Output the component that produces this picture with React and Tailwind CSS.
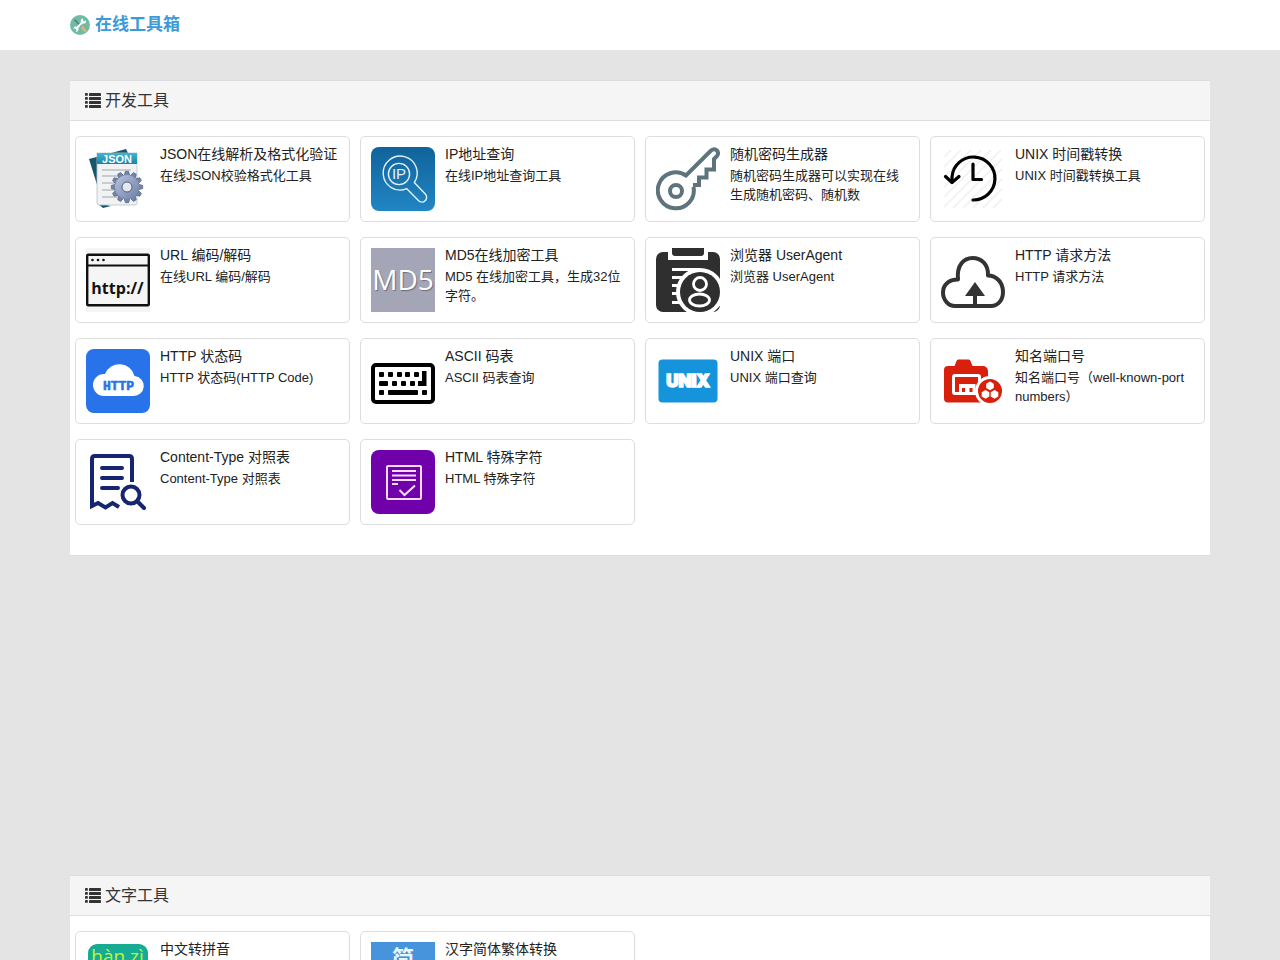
import React from 'react';

const LogoIcon = () => (
  <svg viewBox="0 0 20 20" className="size-5" aria-hidden="true">
    <circle cx="10" cy="10" r="10" fill="#6fbba6" />
    <path d="M12 12l3.200 3.800" stroke="#e3b27a" strokeWidth="2.600" strokeLinecap="round" />
    <path d="M4.800 5l6 6" stroke="#4f777a" strokeWidth="1.300" strokeLinecap="round" />
    <path d="M6 14l7.600-8" stroke="#fff" strokeWidth="2" />
    <path d="M15.800 5.200a2.600 2.600 0 1 1-2.800-1.700l-.2 2 1.200 1z" fill="#fff" />
    <path d="M3.400 13.500a2.600 2.600 0 1 1 2.200 3.100l1-1.600-.9-1.300z" fill="#fff" />
  </svg>
);

const ListIcon = () => (
  <svg viewBox="0 0 16 16" className="size-4" fill="#333" aria-hidden="true">
    {[0, 4, 8, 12].map((y) => (
      <g key={y}>
        <rect x="0" y={y} width="2.800" height="2.800" rx="0.600" />
        <rect x="4" y={y} width="12" height="2.900" rx="0.400" />
      </g>
    ))}
  </svg>
);

const JsonIcon = () => (
  <svg viewBox="0 0 64 64" className="size-16" aria-hidden="true">
    <defs>
      <linearGradient id="json-bar" x1="0" y1="0" x2="0" y2="1">
        <stop offset="0" stopColor="#43b4d2" />
        <stop offset="1" stopColor="#1685aa" />
      </linearGradient>
      <linearGradient id="json-gear" x1="0" y1="0" x2="1" y2="1">
        <stop offset="0" stopColor="#b8c4de" />
        <stop offset="1" stopColor="#6e7fa8" />
      </linearGradient>
    </defs>
    <path d="M3 12L40 2l4 8-26 50z" fill="#17566b" />
    <path d="M11 56l6 5 8-2z" fill="#17566b" />
    <path d="M11 6h40v50a2 2 0 0 1-2 2H13a2 2 0 0 1-2-2z" fill="#f0f2f4" stroke="#b9c2c8" strokeWidth="0.8" />
    <path d="M11 6h40v11H11z" fill="url(#json-bar)" />
    <text x="31" y="15.500" textAnchor="middle" fontFamily="Liberation Sans, sans-serif" fontWeight="700" fontSize="11" fill="#fff">
      JSON
    </text>
    <path d="M16 23h29M16 29h26M16 36h20M16 43h14M16 50h16" stroke="#a0a6aa" strokeWidth="1.2" />
    <g fill="#7485aa" stroke="#4a5874" strokeWidth="0.6">
      {[0, 30, 60, 90, 120, 150, 180, 210, 240, 270, 300, 330].map((a) => (
        <path key={a} d="M38.200 28.500l1.200-4.200h3.200l1.200 4.200z" transform={`rotate(${a} 41 40)`} />
      ))}
    </g>
    <circle cx="41" cy="40" r="12" fill="url(#json-gear)" />
    <circle cx="41" cy="40" r="5" fill="#e5e8ee" stroke="#53617e" />
  </svg>
);

const IpIcon = () => (
  <svg viewBox="0 0 64 64" className="size-16" aria-hidden="true">
    <defs>
      <linearGradient id="ip-bg" x1="0" y1="0" x2="0" y2="1">
        <stop offset="0" stopColor="#10639b" />
        <stop offset="1" stopColor="#2186c4" />
      </linearGradient>
    </defs>
    <rect width="64" height="64" rx="8" fill="url(#ip-bg)" />
    <g fill="none" stroke="#e3f2fa" strokeWidth="1.400" strokeLinejoin="round">
      <path d="M35.800 41.700a17 17 0 1 1 7.500-6.200L54.300 47a4.600 4.600 0 0 1-6.900 6.600z" />
      <circle cx="28" cy="27" r="10.600" />
    </g>
    <text x="28" y="32" textAnchor="middle" fontFamily="Liberation Sans, sans-serif" fontSize="15" fill="#e3f2fa">
      IP
    </text>
  </svg>
);

const KeyIcon = () => (
  <svg viewBox="0 0 64 64" className="size-16" fill="none" stroke="#5d747c" strokeWidth="4" aria-hidden="true">
    <path d="M37 38h6v-7.500h7.500v-8h7.500V12l3-3q2-3 0-5.500-2.800-2.500-6 0L30 28.500A18 18 0 1 0 37.500 40" />
    <circle cx="20" cy="44" r="6" />
  </svg>
);

const TimestampIcon = () => (
  <svg viewBox="0 0 64 64" className="size-16" fill="none" aria-hidden="true">
    <path
      d="M3 10l7-7M3 20L20 3M3 30L30 3M3 40L40 3M3 50L50 3M3 60L60 3M12 61l49-49M22 61l39-39M32 61l29-29M42 61l19-19M52 61l9-9"
      stroke="#f0f0f0"
      strokeWidth="1.600"
    />
    <path d="M32 53a21.500 21.500 0 1 0-21-23v5" stroke="#000" strokeWidth="3.200" strokeLinecap="round" />
    <path d="M4.500 29.500l6.500 6 7-6M32 17v15.500h8.500" stroke="#000" strokeWidth="3.200" strokeLinecap="round" strokeLinejoin="round" />
  </svg>
);

const UrlIcon = () => (
  <svg viewBox="0 0 64 64" className="size-16" aria-hidden="true">
    <rect width="64" height="64" fill="#f5f5f5" />
    <rect x="1.200" y="6.700" width="61.600" height="50.600" rx="1" fill="none" stroke="#111" strokeWidth="2.400" />
    <path d="M1 17.500h62" stroke="#111" strokeWidth="2" />
    <g fill="#111">
      <circle cx="6.500" cy="12" r="1.300" />
      <circle cx="12" cy="12" r="1.300" />
      <circle cx="17.500" cy="12" r="1.300" />
    </g>
    <text x="31.500" y="46" textAnchor="middle" fontFamily="Open Sans, sans-serif" fontWeight="700" fontSize="16" fill="#111">
      http://
    </text>
  </svg>
);

const Md5Icon = () => (
  <svg viewBox="0 0 64 64" className="size-16" aria-hidden="true">
    <rect width="64" height="64" fill="#a4a5b6" />
    <text
      x="32"
      y="42"
      textAnchor="middle"
      fontFamily="Open Sans, sans-serif"
      fontSize="28"
      fill="#fff"
      className="[text-shadow:1px_1px_1px_#6b6c7c]"
    >
      MD5
    </text>
  </svg>
);

const UserAgentIcon = () => (
  <svg viewBox="0 0 64 64" className="size-16" fill="#2f2f2f" aria-hidden="true">
    <path d="M16 0h32v5a3 3 0 0 1-3 3H19a3 3 0 0 1-3-3z" />
    <path d="M7 4h5v8h40V4h5a7 7 0 0 1 7 7v46a7 7 0 0 1-7 7H7a7 7 0 0 1-7-7V11a7 7 0 0 1 7-7z" />
    <g fill="#fff">
      <rect x="16" y="20" width="28" height="3" />
      <rect x="16" y="28" width="14" height="3" />
      <rect x="16" y="36" width="8" height="3" />
      <rect x="16" y="44" width="6" height="3" />
      <rect x="16" y="53" width="8" height="3" />
      <circle cx="44" cy="44" r="24" />
    </g>
    <circle cx="44" cy="44" r="20" />
    <g fill="none" stroke="#fff" strokeWidth="2.800">
      <circle cx="44" cy="36" r="6.500" />
      <ellipse cx="43.500" cy="52" rx="10" ry="6" />
    </g>
  </svg>
);

const CloudUploadIcon = () => (
  <svg viewBox="0 0 64 64" className="size-16" aria-hidden="true">
    <path
      d="M14 58h36c7 0 12-6 12-14 0-10-7-16.500-15-16.500C47.500 16 40 10 31.500 10S15.500 17 17 31.500C7.500 31.500 2 37 2 44.500S7.500 58 14 58z"
      fill="none"
      stroke="#333"
      strokeWidth="4"
      strokeLinejoin="round"
    />
    <path d="M34 34l10 14h-8v11h-4V48h-8z" fill="#333" />
  </svg>
);

const HttpStatusIcon = () => (
  <svg viewBox="0 0 64 64" className="size-16" aria-hidden="true">
    <rect width="64" height="64" rx="8" fill="#2873ea" />
    <path d="M18 47a11 11 0 0 1 0-22h1a15.500 15.500 0 0 1 29.500 2A10 10 0 0 1 47 47z" fill="#fff" />
    <text x="32.500" y="41" textAnchor="middle" fontFamily="Liberation Mono, monospace" fontWeight="700" fontSize="13" fill="#2873ea" stroke="#2873ea" strokeWidth="0.600">
      HTTP
    </text>
  </svg>
);

const KeyboardIcon = () => (
  <svg viewBox="0 0 64 64" className="size-16" aria-hidden="true">
    <rect x="2" y="16" width="60" height="37" rx="3" fill="#fff" stroke="#000" strokeWidth="4" />
    <g fill="#000">
      {[8, 17, 26, 34, 43].map((x) => (
        <rect key={x} x={x} y="23" width="5" height="5" rx="1" />
      ))}
      <path d="M51 22h4.500v15H47v-5h4z" />
      <rect x="8" y="32" width="9" height="5" rx="1" />
      <rect x="21" y="32" width="5" height="5" rx="1" />
      <rect x="30" y="32" width="5" height="5" rx="1" />
      <rect x="39" y="32" width="5" height="5" rx="1" />
      <rect x="8" y="41" width="5" height="5" rx="1" />
      <rect x="17" y="41" width="30" height="5" rx="1" />
      <rect x="51" y="41" width="5" height="5" rx="1" />
    </g>
  </svg>
);

const UnixPortIcon = () => (
  <svg viewBox="0 0 64 64" className="size-16" aria-hidden="true">
    <rect x="2.500" y="10.500" width="59" height="43" rx="4" fill="#1594dc" />
    <text
      x="32"
      y="37.500"
      textAnchor="middle"
      fontFamily="Inter, sans-serif"
      fontWeight="900"
      fontSize="17"
      fill="#fff"
      stroke="#fff"
      strokeWidth="1.400"
    >
      UNIX
    </text>
  </svg>
);

const KnownPortIcon = () => (
  <svg viewBox="0 0 64 64" className="size-16" aria-hidden="true">
    <path
      d="M7 17h6.500l2-5a2 2 0 0 1 2-1.500h10a2 2 0 0 1 2 1.500l2 5H42a5 5 0 0 1 5 5v31.500H7a4 4 0 0 1-4-4V21a4 4 0 0 1 4-4z"
      fill="#d8200d"
    />
    <rect x="12.500" y="26.500" width="26" height="18" rx="1.500" fill="none" stroke="#fff" strokeWidth="3" />
    <path d="M18 35h16.500v9.500h-3V39h-3v5.500H24V39h-3v5.500h-3z" fill="#fff" />
    <circle cx="49" cy="42" r="13.500" fill="#d8200d" stroke="#fff" strokeWidth="3" />
    <g fill="#fff">
      <path d="M49 32.500l3.800 2.200v4.400L49 41.200l-3.800-2.100v-4.400z" />
      <path d="M44.500 41l3.800 2.200v4.400l-3.800 2.100-3.800-2.100v-4.400z" />
      <path d="M53.500 41l3.800 2.200v4.400l-3.800 2.100-3.800-2.100v-4.400z" />
    </g>
  </svg>
);

const ContentTypeIcon = () => (
  <svg viewBox="0 0 64 64" className="size-16" fill="none" stroke="#16256f" strokeWidth="4" aria-hidden="true">
    <path d="M46 32V9q0-3-3-3H9Q6 6 6 9v47l6-3 7.500 4.500 7-4.500 6.500 4" />
    <path d="M16 18h20M16 28h20M16 38h16" strokeLinecap="round" />
    <circle cx="45" cy="45" r="8.500" />
    <path d="M51.500 51.500L58 58" strokeLinecap="round" />
  </svg>
);

const HtmlCharsIcon = () => (
  <svg viewBox="0 0 64 64" className="size-16" fill="none" stroke="#f7dcff" aria-hidden="true">
    <rect width="64" height="64" rx="8" fill="#7000aa" stroke="none" />
    <rect x="16" y="16" width="34" height="33" rx="1" strokeWidth="2" />
    <path d="M21 21h24M21 25.500h24M21 30h24M21 34h6" strokeWidth="2" />
    <path d="M28.500 40l5 5L44 35.500" strokeWidth="2" />
  </svg>
);

const PinyinIcon = () => (
  <svg viewBox="0 0 64 64" className="size-16" aria-hidden="true">
    <rect x="2" y="2" width="60" height="60" rx="9" fill="#17ab93" />
    <text x="31.500" y="21" textAnchor="middle" fontFamily="Open Sans, sans-serif" fontSize="19" fill="#c5f436">
      hàn zì
    </text>
  </svg>
);

const SimplifiedIcon = () => (
  <svg viewBox="0 0 64 64" className="size-16" aria-hidden="true">
    <rect width="64" height="64" fill="#4894dc" />
    <text x="32" y="24" textAnchor="middle" fontFamily="Noto Sans CJK SC, sans-serif" fontWeight="700" fontSize="22" fill="#e8f8ff">
      简
    </text>
  </svg>
);

const devTools = [
  { title: 'JSON在线解析及格式化验证', desc: '在线JSON校验格式化工具', Icon: JsonIcon },
  { title: 'IP地址查询', desc: '在线IP地址查询工具', Icon: IpIcon },
  { title: '随机密码生成器', desc: '随机密码生成器可以实现在线生成随机密码、随机数', Icon: KeyIcon },
  { title: 'UNIX 时间戳转换', desc: 'UNIX 时间戳转换工具', Icon: TimestampIcon },
  { title: 'URL 编码/解码', desc: '在线URL 编码/解码', Icon: UrlIcon },
  { title: 'MD5在线加密工具', desc: 'MD5 在线加密工具，生成32位字符。', Icon: Md5Icon },
  { title: '浏览器 UserAgent', desc: '浏览器 UserAgent', Icon: UserAgentIcon },
  { title: 'HTTP 请求方法', desc: 'HTTP 请求方法', Icon: CloudUploadIcon },
  { title: 'HTTP 状态码', desc: 'HTTP 状态码(HTTP Code)', Icon: HttpStatusIcon },
  { title: 'ASCII 码表', desc: 'ASCII 码表查询', Icon: KeyboardIcon },
  { title: 'UNIX 端口', desc: 'UNIX 端口查询', Icon: UnixPortIcon },
  { title: '知名端口号', desc: '知名端口号（well-known-port numbers）', Icon: KnownPortIcon },
  { title: 'Content-Type 对照表', desc: 'Content-Type 对照表', Icon: ContentTypeIcon },
  { title: 'HTML 特殊字符', desc: 'HTML 特殊字符', Icon: HtmlCharsIcon },
];

const textTools = [
  { title: '中文转拼音', desc: '中文转拼音', Icon: PinyinIcon },
  { title: '汉字简体繁体转换', desc: '汉字简体繁体转换', Icon: SimplifiedIcon },
];

const ToolCard = ({ title, desc, Icon }) => (
  <a href="#" className="flex gap-[10px] rounded-[5px] border border-[#ddd] p-[10px] text-[#222]">
    <span className="shrink-0">
      <Icon />
    </span>
    <span className="min-w-0 flex-1">
      <h4 className="mb-1 text-[14px] leading-[15px]">{title}</h4>
      <p className="text-[13px] leading-[19px]">{desc}</p>
    </span>
  </a>
);

const ToolPanel = ({ title, tools }) => (
  <section className="border-y border-[#ddd] bg-white">
    <h3 className="flex items-center gap-1 border-b border-[#ddd] bg-[#f5f5f5] px-[15px] py-[10px] text-[16px] leading-[19px] text-[#333]">
      <ListIcon />
      {title}
    </h3>
    <div className="grid grid-cols-1 gap-x-[10px] gap-y-[15px] px-[5px] pt-[15px] pb-[30px] sm:grid-cols-2 lg:grid-cols-4">
      {tools.map((tool) => (
        <ToolCard key={tool.title} {...tool} />
      ))}
    </div>
  </section>
);

export default function App() {
  return (
    <div className="min-h-screen bg-[#e4e4e4] font-['Liberation_Sans','Noto_Sans_CJK_SC',sans-serif]">
      <header className="bg-white">
        <div className="mx-auto flex h-[50px] max-w-[1140px] items-center">
          <a href="#" className="flex items-center gap-[5px] text-[17px] leading-5 font-bold text-[#3d9ad9]">
            <LogoIcon />
            在线工具箱
          </a>
        </div>
      </header>
      <main className="mx-auto flex max-w-[1140px] flex-col gap-[319px] py-[30px]">
        <ToolPanel title="开发工具" tools={devTools} />
        <ToolPanel title="文字工具" tools={textTools} />
      </main>
    </div>
  );
}
